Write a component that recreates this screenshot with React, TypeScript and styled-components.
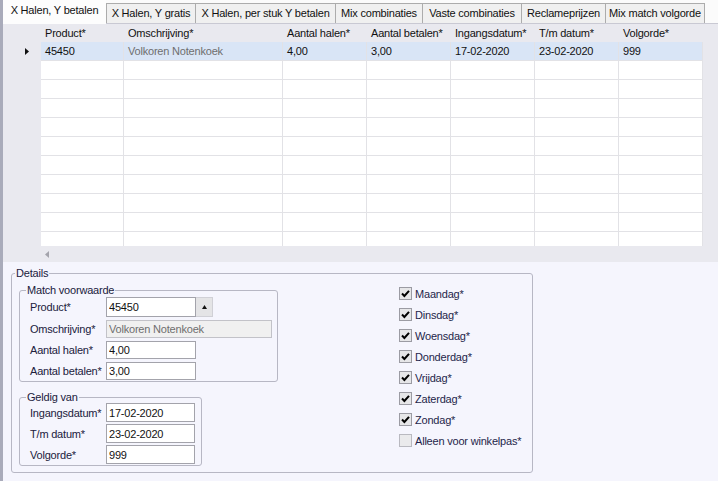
import React from "react";
import styled, { createGlobalStyle } from "styled-components";

const GlobalStyle = createGlobalStyle`
  html, body {
    margin: 0;
    padding: 0;
  }
  body {
    font-family: "Liberation Sans", Arial, sans-serif;
    font-size: 11px;
    letter-spacing: -0.2px;
    color: #000;
    background: #fff;
  }
  * {
    box-sizing: border-box;
  }
`;

const StWindow = styled.div`
  width: 718px;
  height: 481px;
  display: flex;
  overflow: hidden;
  background: #fbfbfb;
`;

const StSideStrip = styled.div`
  width: 3px;
  flex: none;
  background: #a9abba;
`;

const StMain = styled.div`
  flex: 1;
  min-width: 0;
  display: flex;
  flex-direction: column;
`;

const StTabStrip = styled.div`
  height: 24px;
  display: flex;
  align-items: flex-start;
  border-bottom: 1px solid #c9c9d3;
  background: #fbfbfb;
`;

const StTab = styled.div<{ $active?: boolean; $w: number }>`
  width: ${(p) => p.$w}px;
  flex: none;
  white-space: nowrap;
  text-align: center;
  color: #111;
  ${(p) =>
    p.$active
      ? `
    height: 24px;
    padding-top: 4px;
    background: #fdfdfd;
    position: relative;
    z-index: 1;
  `
      : `
    height: 20px;
    margin-top: 3px;
    padding-top: 3px;
    background: #f0f0f0;
    border: 1px solid #acacac;
    border-bottom: none;
    margin-left: -1px;
  `}
  &:nth-child(2) {
    margin-left: 0;
  }
`;

const StGridPanel = styled.div`
  height: 238px;
  flex: none;
  background: #e9e9ef;
  display: flex;
  flex-direction: column;
`;

const COLS = "38px 83px 159px 84px 84px 84px 84px 84px";

const StHeaderRow = styled.div`
  display: grid;
  grid-template-columns: ${COLS};
  height: 18px;
  align-items: center;
  flex: none;
`;

const StHeaderCell = styled.div`
  padding-left: 4px;
  color: #111;
  white-space: nowrap;
`;

const StBody = styled.div`
  height: 204px;
  overflow: hidden;
  flex: none;
`;

const StRow = styled.div`
  display: grid;
  grid-template-columns: ${COLS};
  height: 19px;
`;

const StRowHead = styled.div`
  display: flex;
  align-items: center;
  padding-left: 22px;
`;

const StCell = styled.div<{ $muted?: boolean; $selected?: boolean }>`
  background: ${(p) => (p.$selected ? "#d9e5f6" : "#fff")};
  border-right: 1px solid #e2e2e6;
  border-bottom: 1px solid #e2e2e6;
  padding-left: 4px;
  line-height: 18px;
  white-space: nowrap;
  overflow: hidden;
  color: ${(p) => (p.$muted ? "#6e6e6e" : "#111")};
`;

const StScrollRow = styled.div`
  height: 16px;
  flex: none;
  display: flex;
  align-items: center;
  padding-left: 42px;
`;

const StDetailsArea = styled.div`
  flex: 1;
  background: #f5f5fd;
  padding: 5px 0 0 8px;
`;

const StGroup = styled.fieldset<{ $w: number; $pad: string }>`
  margin: 0;
  min-width: 0;
  width: ${(p) => p.$w}px;
  border: 1px solid #b7b7c4;
  border-radius: 3px;
  padding: ${(p) => p.$pad};
`;

const StLegend = styled.legend<{ $mb?: number }>`
  padding: 0 1px;
  margin-left: -4px;
  margin-bottom: ${(p) => p.$mb ?? 0}px;
  line-height: 13px;
  color: #20203c;
`;

const StDetailsBody = styled.div`
  display: flex;
  align-items: flex-start;
`;

const StLeftColumn = styled.div`
  display: flex;
  flex-direction: column;
  gap: 9px;
`;

const StFieldRow = styled.div<{ $h?: number }>`
  display: flex;
  align-items: center;
  height: ${(p) => p.$h ?? 21}px;
`;

const StFieldLabel = styled.div`
  width: 76px;
  flex: none;
  color: #20203c;
  white-space: nowrap;
`;

const StTextInput = styled.input<{ $w: number; $h?: number }>`
  width: ${(p) => p.$w}px;
  height: ${(p) => p.$h ?? 18}px;
  margin: 0;
  padding: 0 0 0 2px;
  border: 1px solid #a3a3ab;
  background: #fff;
  font: inherit;
  letter-spacing: inherit;
  color: #111;
  outline: none;
  &:disabled {
    background: #f0f0f0;
    border-color: #c2c2c8;
    color: #6e6e6e;
  }
`;

const StCombo = styled.div`
  display: flex;
  height: 20px;
`;

const StDropButton = styled.div`
  width: 17px;
  height: 20px;
  background: #e4e4e6;
  border: 1px solid #d0d0d6;
  border-left: none;
  display: flex;
  align-items: center;
  justify-content: center;
`;

const StCheckList = styled.div`
  margin-left: 121px;
  margin-top: -1px;
  display: flex;
  flex-direction: column;
`;

const StCheckRow = styled.div`
  height: 21px;
  display: flex;
  align-items: center;
  gap: 3px;
`;

const StCheckBox = styled.div<{ $checked: boolean }>`
  width: 13px;
  height: 13px;
  border: 1px solid ${(p) => (p.$checked ? "#9b9ba3" : "#b9b9c0")};
  background: ${(p) => (p.$checked ? "#e6e6e8" : "#eaeaec")};
  display: flex;
  align-items: center;
  justify-content: center;
`;

const StCheckLabel = styled.span`
  color: #1f1f4a;
  white-space: nowrap;
`;

const tabs = [
  { label: "X Halen, Y betalen", w: 103, active: true },
  { label: "X Halen, Y gratis", w: 90 },
  { label: "X Halen, per stuk Y betalen", w: 141 },
  { label: "Mix combinaties", w: 88 },
  { label: "Vaste combinaties", w: 100 },
  { label: "Reclameprijzen", w: 85 },
  { label: "Mix match volgorde", w: 100 },
];

const columns = [
  { label: "Product*", value: "45450" },
  { label: "Omschrijving*", value: "Volkoren Notenkoek", muted: true },
  { label: "Aantal halen*", value: "4,00" },
  { label: "Aantal betalen*", value: "3,00" },
  { label: "Ingangsdatum*", value: "17-02-2020" },
  { label: "T/m datum*", value: "23-02-2020" },
  { label: "Volgorde*", value: "999" },
];

const days = [
  { label: "Maandag*", checked: true },
  { label: "Dinsdag*", checked: true },
  { label: "Woensdag*", checked: true },
  { label: "Donderdag*", checked: true },
  { label: "Vrijdag*", checked: true },
  { label: "Zaterdag*", checked: true },
  { label: "Zondag*", checked: true },
  { label: "Alleen voor winkelpas*", checked: false },
];

const CheckMark = () => (
  <svg width="9" height="9" viewBox="0 0 9 9">
    <path d="M1 4.5 L3.4 7 L8 1.8" stroke="#000" strokeWidth="2" fill="none" />
  </svg>
);

const Field: React.FC<{ label: string; value: string; w: number; h?: number; disabled?: boolean }> = ({
  label,
  value,
  w,
  h,
  disabled,
}) => (
  <StFieldRow>
    <StFieldLabel>{label}</StFieldLabel>
    <StTextInput $w={w} $h={h} value={value} readOnly disabled={disabled} />
  </StFieldRow>
);

export default function App() {
  const emptyRows = Array.from({ length: 10 });
  return (
    <>
      <GlobalStyle />
      <StWindow>
        <StSideStrip />
        <StMain>
          <StTabStrip>
            {tabs.map((t) => (
              <StTab key={t.label} $active={t.active} $w={t.w}>
                {t.label}
              </StTab>
            ))}
          </StTabStrip>

          <StGridPanel>
            <StHeaderRow>
              <div />
              {columns.map((c) => (
                <StHeaderCell key={c.label}>{c.label}</StHeaderCell>
              ))}
            </StHeaderRow>
            <StBody>
              <StRow>
                <StRowHead>
                  <svg width="4" height="7" viewBox="0 0 4 7">
                    <path d="M0 0 L4 3.5 L0 7 Z" fill="#111" />
                  </svg>
                </StRowHead>
                {columns.map((c) => (
                  <StCell key={c.label} $muted={c.muted} $selected>
                    {c.value}
                  </StCell>
                ))}
              </StRow>
              {emptyRows.map((_, i) => (
                <StRow key={i}>
                  <StRowHead />
                  {columns.map((c) => (
                    <StCell key={c.label} />
                  ))}
                </StRow>
              ))}
            </StBody>
            <StScrollRow>
              <svg width="4" height="7" viewBox="0 0 4 7">
                <path d="M4 0 L0 3.5 L4 7 Z" fill="#a4a4ac" />
              </svg>
            </StScrollRow>
          </StGridPanel>

          <StDetailsArea>
            <StGroup $w={522} $pad="4px 7px 6px 7px">
              <StLegend>Details</StLegend>
              <StDetailsBody>
                <StLeftColumn>
                  <StGroup $w={259} $pad="0 4px 0 10px">
                    <StLegend $mb={-1}>Match voorwaarde</StLegend>
                    <StFieldRow $h={22}>
                      <StFieldLabel>Product*</StFieldLabel>
                      <StCombo>
                        <StTextInput $w={90} $h={20} value="45450" readOnly />
                        <StDropButton>
                          <svg width="5" height="4" viewBox="0 0 5 4">
                            <path d="M2.5 0 L5 4 L0 4 Z" fill="#111" />
                          </svg>
                        </StDropButton>
                      </StCombo>
                    </StFieldRow>
                    <Field label="Omschrijving*" value="Volkoren Notenkoek" w={166} disabled />
                    <Field label="Aantal halen*" value="4,00" w={90} />
                    <Field label="Aantal betalen*" value="3,00" w={90} />
                  </StGroup>
                  <StGroup $w={183} $pad="0 4px 0 10px">
                    <StLegend $mb={-2}>Geldig van</StLegend>
                    <Field label="Ingangsdatum*" value="17-02-2020" w={89} h={19} />
                    <Field label="T/m datum*" value="23-02-2020" w={89} h={19} />
                    <Field label="Volgorde*" value="999" w={89} h={19} />
                  </StGroup>
                </StLeftColumn>
                <StCheckList>
                  {days.map((d) => (
                    <StCheckRow key={d.label}>
                      <StCheckBox $checked={d.checked}>{d.checked && <CheckMark />}</StCheckBox>
                      <StCheckLabel>{d.label}</StCheckLabel>
                    </StCheckRow>
                  ))}
                </StCheckList>
              </StDetailsBody>
            </StGroup>
          </StDetailsArea>
        </StMain>
      </StWindow>
    </>
  );
}
